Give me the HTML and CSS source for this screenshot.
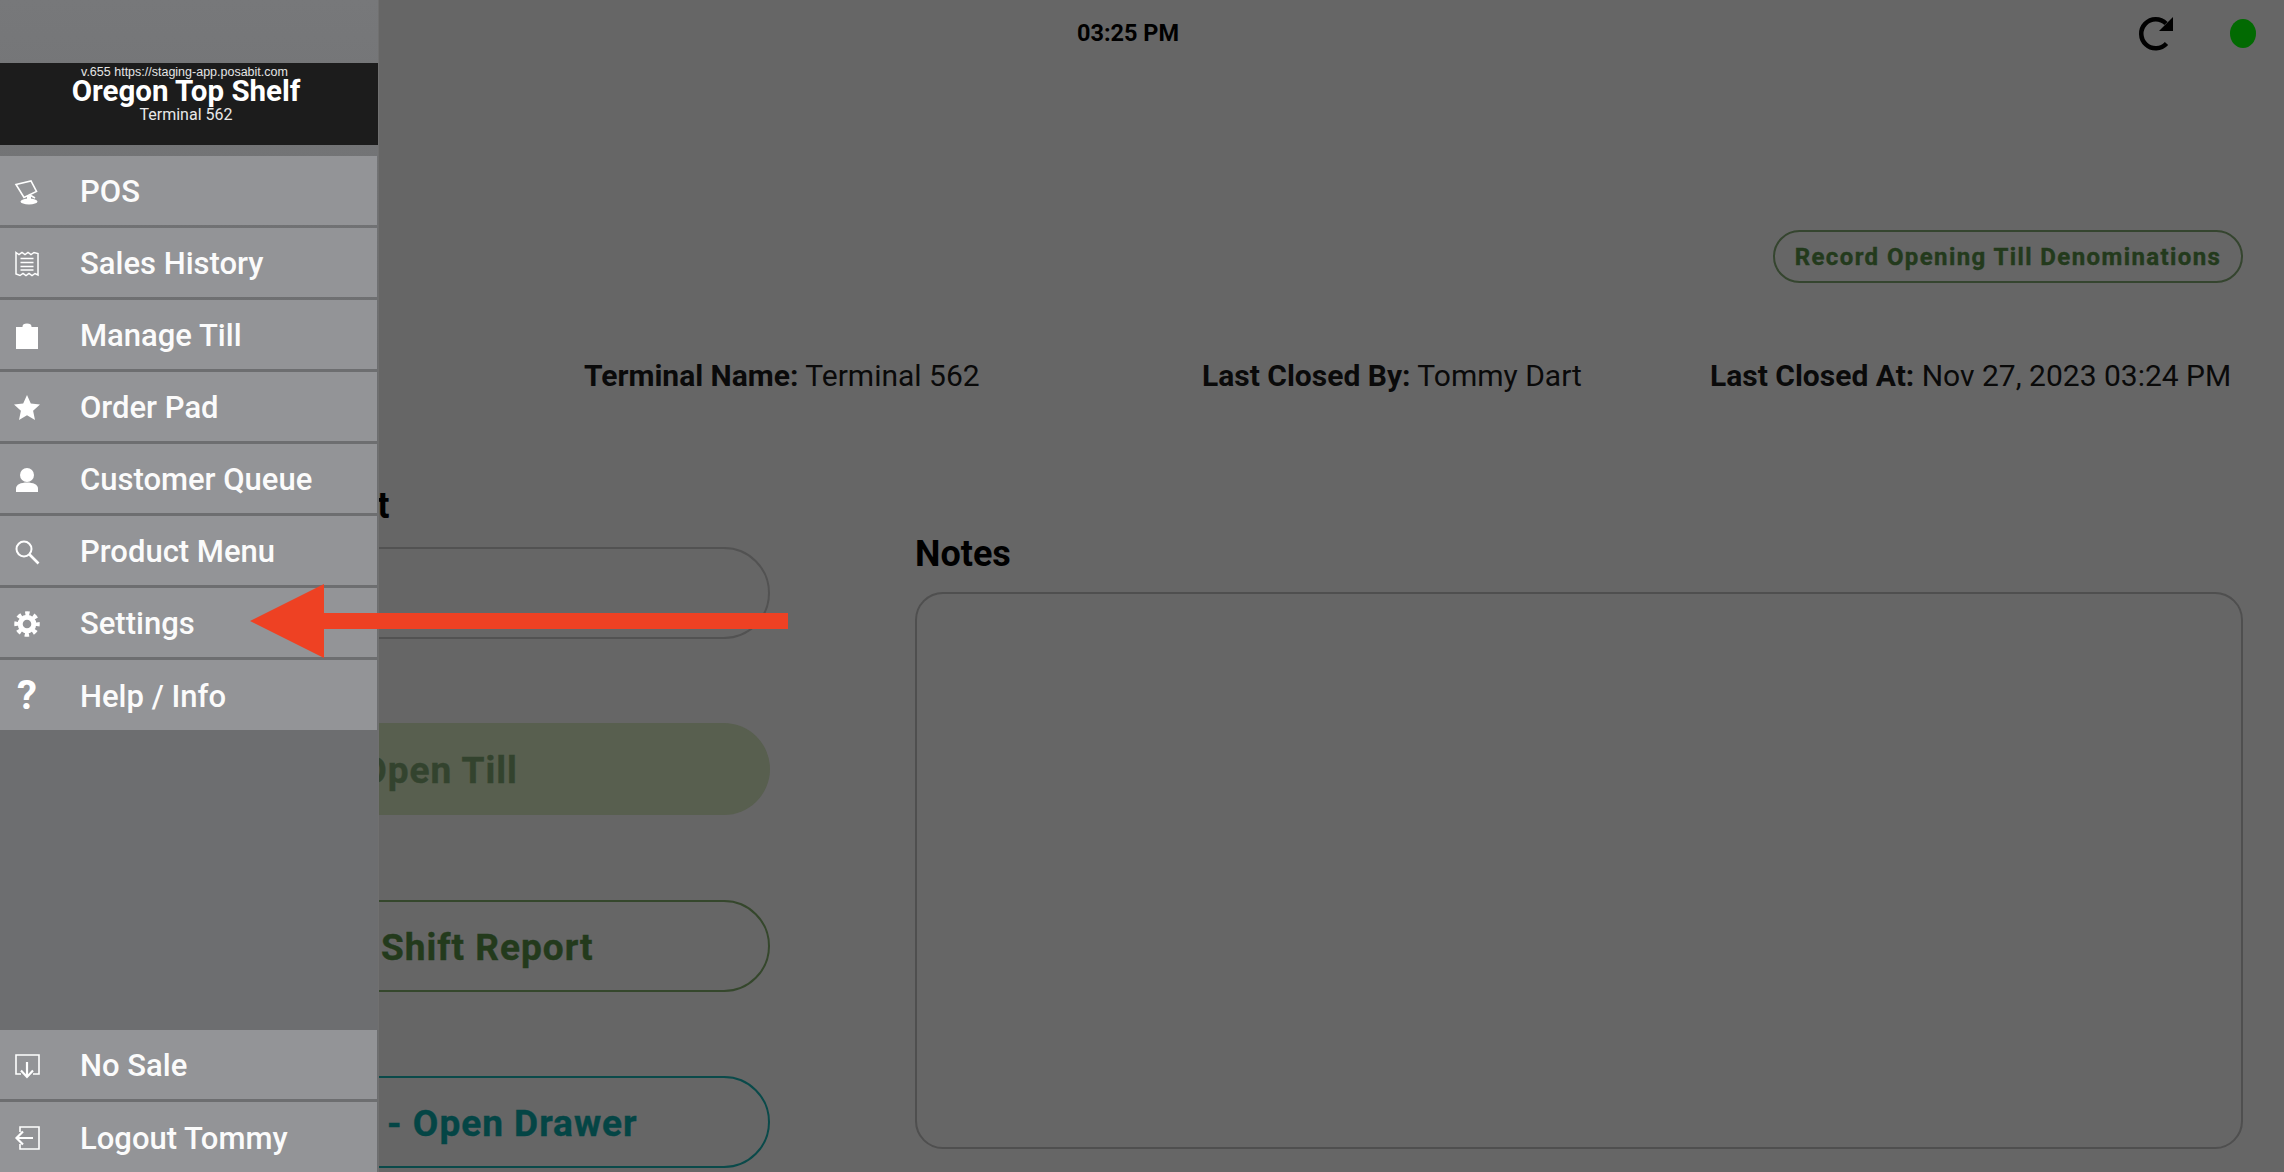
FILE: index.html
```html
<!DOCTYPE html>
<html lang="en">
<head>
    <meta charset="UTF-8">
    <meta name="viewport" content="width=device-width, initial-scale=1.0">
    <title>Till</title>
    <link rel="stylesheet" href="styles.css">
</head>
<body>
    <div class="main">
        <div class="topbar">
            <div class="time">03:25 PM</div>
            <div class="status">
                <svg class="refresh" viewBox="0 0 36 38">
                    <path d="M28.5 29.5A14.5 14.5 0 1 1 28 9.5" fill="none" stroke="#000" stroke-width="4.5"/>
                    <path d="M35 3V17H21Z" fill="#000"/>
                </svg>
                <span class="dot"></span>
            </div>
        </div>

        <div class="record-row">
            <button class="record-btn">Record Opening Till Denominations</button>
        </div>

        <div class="info">
            <p><strong>Terminal Name:</strong> Terminal 562</p>
            <p><strong>Last Closed By:</strong> Tommy Dart</p>
            <p><strong>Last Closed At:</strong> Nov 27, 2023 03:24 PM</p>
        </div>

        <div class="content">
            <div class="till-col">
                <h2 class="amount-title">Opening Amount</h2>
                <div class="amount-input"></div>
                <button class="pill pill-filled">Open Till</button>
                <button class="pill pill-green">Print Shift Report</button>
                <button class="pill pill-teal">No Sale - Open Drawer</button>
            </div>
            <div class="notes-col">
                <h2 class="notes-title">Notes</h2>
                <div class="notes-box"></div>
            </div>
        </div>
    </div>

    <div class="sidebar">
        <div class="brand">
            <div class="brand-version">v.655 https://staging-app.posabit.com</div>
            <div class="brand-name">Oregon Top Shelf</div>
            <div class="brand-terminal">Terminal 562</div>
        </div>

        <div class="menu">
            <div class="menu-item">
                <svg class="icon" viewBox="0 0 26 26">
                    <path d="M2 5.5L17 2L22.5 12.5L10 18.5Z" fill="none" stroke="#fff" stroke-width="1.6"/>
                    <path d="M15 15.5L21 19" fill="none" stroke="#fff" stroke-width="1.6"/>
                    <ellipse cx="15" cy="22.5" rx="8.5" ry="3" fill="#fff"/>
                    <rect x="13" y="17" width="4" height="5" fill="#fff"/>
                </svg>
                <span>POS</span>
            </div>
            <div class="menu-item">
                <svg class="icon" viewBox="0 0 26 26">
                    <path d="M2 1.5L5 3.5L8 1.5L11 3.5L14 1.5L17 3.5L20 1.5L24 2.5V24L21 22.5L18 24.5L15 22.5L12 24.5L9 22.5L6 24.5L2 23Z" fill="none" stroke="#fff" stroke-width="1.5"/>
                    <path d="M6.5 7.5H19.5M6.5 11.5H19.5M6.5 15.5H19.5M6.5 19H19.5" stroke="#fff" stroke-width="1.6"/>
                </svg>
                <span>Sales History</span>
            </div>
            <div class="menu-item">
                <svg class="icon" viewBox="0 0 26 26">
                    <path d="M2 4H8.5V3.5A4.5 3 0 0 1 17.5 3.5V4H24V26H2Z" fill="#fff"/>
                </svg>
                <span>Manage Till</span>
            </div>
            <div class="menu-item">
                <svg class="icon" viewBox="0 0 26 26">
                    <path d="M13 0L16.8 8.6L26 9.6L19.1 15.8L21 25L13 20.3L5 25L6.9 15.8L0 9.6L9.2 8.6Z" fill="#fff"/>
                </svg>
                <span>Order Pad</span>
            </div>
            <div class="menu-item">
                <svg class="icon" viewBox="0 0 26 26">
                    <circle cx="13" cy="8" r="7" fill="#fff"/>
                    <path d="M2 25V21.5C2 17.5 7 15.5 13 15.5C19 15.5 24 17.5 24 21.5V25Z" fill="#fff"/>
                </svg>
                <span>Customer Queue</span>
            </div>
            <div class="menu-item">
                <svg class="icon" viewBox="0 0 26 26">
                    <circle cx="10" cy="10" r="7.5" fill="none" stroke="#fff" stroke-width="2"/>
                    <path d="M15.5 15.5L24.5 24.5" stroke="#fff" stroke-width="2.6"/>
                </svg>
                <span>Product Menu</span>
            </div>
            <div class="menu-item">
                <svg class="icon" viewBox="0 0 26 26">
                    <circle cx="13" cy="13" r="6.8" fill="none" stroke="#fff" stroke-width="5"/>
                    <circle cx="13" cy="13" r="10.5" fill="none" stroke="#fff" stroke-width="4.5" stroke-dasharray="4.25 4" stroke-dashoffset="2.1"/>
                </svg>
                <span>Settings</span>
            </div>
            <div class="menu-item">
                <span class="icon icon-glyph">?</span>
                <span>Help / Info</span>
            </div>
        </div>

        <div class="menu menu-bottom">
            <div class="menu-item">
                <svg class="icon" viewBox="0 0 26 26">
                    <path d="M7 21H2V2H25V21H19" fill="none" stroke="#fff" stroke-width="1.6"/>
                    <path d="M13 9V23M7 17.5L13 24L19 17.5" fill="none" stroke="#fff" stroke-width="2.2"/>
                </svg>
                <span>No Sale</span>
            </div>
            <div class="menu-item">
                <svg class="icon" viewBox="0 0 26 26">
                    <path d="M6 7V2H25V24H6V19" fill="none" stroke="#fff" stroke-width="1.6"/>
                    <path d="M19 13H3M9 6.5L2.5 13L9 19.5" fill="none" stroke="#fff" stroke-width="2.2"/>
                </svg>
                <span>Logout Tommy</span>
            </div>
        </div>
    </div>

    <div class="arrow">
        <div class="arrow-head"></div>
        <div class="arrow-shaft"></div>
    </div>
</body>
</html>
```

FILE: styles.css
```css
* {
    box-sizing: border-box;
}
html, body {
    margin: 0;
    height: 100%;
}
body {
    width: 2284px;
    height: 1172px;
    overflow: hidden;
    position: relative;
    background: #666666;
    font-family: Roboto, "Liberation Sans", sans-serif;
    color: #000;
}
.main {
    display: flex;
    flex-direction: column;
    height: 100%;
    padding-right: 41px;
}
.topbar {
    display: grid;
    grid-template-columns: 1fr auto 1fr;
    align-items: center;
    height: 66px;
    margin-right: -13px;
}
.time {
    grid-column: 2;
    font-size: 23.5px;
    font-weight: 700;
    color: #000;
}
.status {
    grid-column: 3;
    display: flex;
    justify-content: flex-end;
    align-items: center;
    gap: 56px;
}
.refresh {
    width: 36px;
    height: 38px;
}
.dot {
    width: 26px;
    height: 29px;
    border-radius: 50%;
    background: #026a02;
}
.record-row {
    display: flex;
    justify-content: flex-end;
    margin-top: 164px;
}
.record-btn {
    height: 53px;
    width: 470px;
    padding: 0;
    border: 2px solid #35452f;
    border-radius: 27px;
    background: transparent;
    color: #233a1c;
    font-family: inherit;
    font-size: 24px;
    font-weight: 700;
    letter-spacing: 1.4px;
    -webkit-text-stroke: 0.4px currentColor;
}
.info {
    display: grid;
    grid-template-columns: 618px 508px auto;
    margin-top: 75px;
    padding-left: 584px;
    font-size: 30px;
    line-height: 36px;
    color: #0a0a0a;
}
.info p {
    margin: 0;
    white-space: nowrap;
}
.content {
    display: grid;
    grid-template-columns: 663px 1328px;
    column-gap: 145px;
    padding-left: 107px;
    margin-top: 91px;
}
.amount-title {
    margin: 0 0 20px;
    height: 42px;
    font-size: 36px;
    line-height: 42px;
    font-weight: 700;
    white-space: nowrap;
    padding-left: 11px;
}
.amount-input {
    height: 92px;
    border: 2px solid #525252;
    border-radius: 46px;
}
.pill {
    display: block;
    width: 100%;
    height: 92px;
    margin-top: 84px;
    padding: 2px 0 0 2px;
    border-radius: 46px;
    background: transparent;
    font-family: inherit;
    font-size: 37px;
    font-weight: 700;
    letter-spacing: 1px;
    -webkit-text-stroke: 0.4px currentColor;
}
.pill-filled {
    border: none;
    background: #585f4f;
    color: #33432e;
}
.pill-green {
    margin-top: 85px;
    border: 2px solid #35472c;
    color: #233a1c;
}
.pill-teal {
    border: 2px solid #0a4a4a;
    color: #044545;
}
.notes-col {
    padding-top: 48px;
}
.notes-title {
    margin: 0 0 17px;
    height: 42px;
    font-size: 36px;
    line-height: 42px;
    font-weight: 700;
}
.notes-box {
    height: 557px;
    border: 2px solid #4f4f4f;
    border-radius: 28px;
}
.sidebar {
    position: absolute;
    top: 0;
    left: 0;
    bottom: 0;
    width: 379px;
    display: flex;
    flex-direction: column;
    padding-top: 63px;
    background: linear-gradient(#77787a, #6d6e70 30%, #6d6e70);
    border-right: 1px solid #707070;
    color: #fff;
}
.brand {
    height: 82px;
    background: #1c1c1c;
    text-align: center;
    padding: 2px 6px 0 0;
}
.brand-version {
    padding-right: 3px;
    font-family: "Liberation Sans", sans-serif;
    font-size: 12.5px;
    line-height: 15px;
    color: #e4e4e4;
}
.brand-name {
    font-size: 29.5px;
    font-weight: 700;
    line-height: 22px;
}
.brand-terminal {
    margin-top: 3px;
    font-size: 16px;
    line-height: 20px;
    color: #e8e8e8;
}
.menu {
    margin-top: 11px;
    margin-right: 1px;
}
.menu-bottom {
    margin-top: auto;
}
.menu-item {
    display: flex;
    align-items: center;
    height: 69px;
    margin-bottom: 3px;
    background: #939497;
    font-size: 31px;
    font-weight: 500;
    padding: 2px 0 0 14px;
    color: #fbfbfb;
}
.menu-item:last-child {
    margin-bottom: 0;
    height: 70px;
}
.icon {
    width: 26px;
    height: 26px;
    margin-right: 40px;
    flex-shrink: 0;
}
.icon-glyph {
    font-size: 40px;
    font-weight: 700;
    line-height: 26px;
    text-align: center;
    color: #fff;
}
.arrow {
    position: absolute;
    left: 250px;
    top: 584px;
    display: flex;
    align-items: center;
    height: 74px;
}
.arrow-head {
    width: 0;
    height: 0;
    border-top: 37px solid transparent;
    border-bottom: 37px solid transparent;
    border-right: 74px solid #ee4123;
}
.arrow-shaft {
    width: 464px;
    height: 16px;
    background: #ee4123;
}
```
